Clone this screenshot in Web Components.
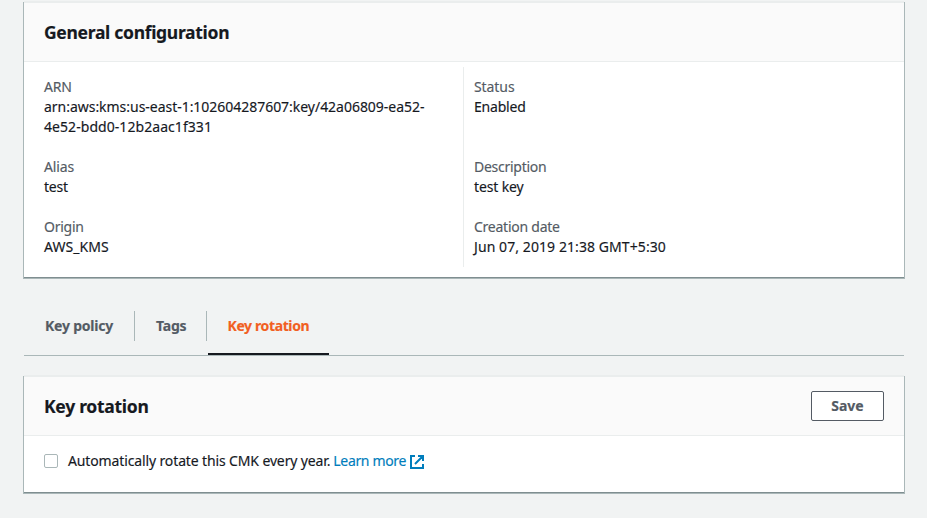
<!DOCTYPE html>
<html lang="en">
<head>
<meta charset="utf-8">
<title>Customer managed key</title>
<style>
body { margin: 0; height: 518px; overflow: hidden; background: #f1f3f3; color: #16191f; font: 14px/20px "Noto Sans", "Open Sans", sans-serif; -webkit-text-stroke: .15px currentColor; }
</style>
</head>
<body>
<kms-page></kms-page>

<template id="t-page">
<style>
:host { display: block; padding: 1px 23px 0 24px; }
.fields { display: grid; grid-template-columns: 439px 1fr; padding: 5px 0 10px; }
.col { display: grid; grid-template-rows: 80px 60px 60px; padding: 0 20px 0 20px; }
.col > * { padding-top: 10px; }
.col + .col { border-left: 1px solid #eaeded; padding-left: 10px; }
kms-tabs { margin: 33px 0 19px; }
.rotate { display: flex; align-items: center; padding: 15px 20px 21px; }
.rotate .text { margin-left: 10px; letter-spacing: -.13px; white-space: nowrap; }
kms-link { margin-left: 3px; }
</style>
<kms-panel>
  <span slot="title" style="letter-spacing:-.3px">General configuration</span>
  <div class="fields">
    <div class="col">
      <kms-field label="ARN" style="--label-spacing:-.2px;--value-spacing:-.03px">arn:aws:kms:us-east-1:102604287607:key/42a06809-ea52-<br><span style="letter-spacing:.06px">4e52-bdd0-12b2aac1f331</span></kms-field>
      <kms-field label="Alias" style="--label-spacing:-.1px;--value-spacing:-.2px">test</kms-field>
      <kms-field label="Origin" style="--label-spacing:-.25px;--value-spacing:.05px">AWS_KMS</kms-field>
    </div>
    <div class="col">
      <kms-field label="Status" style="--label-spacing:-.08px;--value-spacing:-.2px">Enabled</kms-field>
      <kms-field label="Description" style="--label-spacing:-.27px;--value-spacing:-.12px">test key</kms-field>
      <kms-field label="Creation date" style="--label-spacing:-.25px;--value-spacing:.08px">Jun 07, 2019 21:38 GMT+5:30</kms-field>
    </div>
  </div>
</kms-panel>
<kms-tabs>
  <kms-tab style="width:111px;letter-spacing:-.22px">Key policy</kms-tab>
  <kms-tab style="width:72px;letter-spacing:-.2px">Tags</kms-tab>
  <kms-tab active style="width:121px;letter-spacing:-.38px">Key rotation</kms-tab>
</kms-tabs>
<kms-panel>
  <span slot="title" style="letter-spacing:-.28px">Key rotation</span>
  <kms-button slot="actions">Save</kms-button>
  <div class="rotate">
    <kms-checkbox></kms-checkbox>
    <span class="text">Automatically rotate this CMK every year.</span>
    <kms-link>Learn more</kms-link>
  </div>
</kms-panel>
</template>

<template id="t-panel">
<style>
:host { display: block; background: #fff; border-top: 2px solid #eaeded; box-shadow: -1px 1px 0 #aab7b8, 1px 1px 0 #aab7b8; }
header { display: flex; align-items: center; justify-content: space-between; box-sizing: border-box; height: 59px; padding: 0 20px; background: #fafafa; border-bottom: 1px solid #eaeded; }
h2 { margin: 0; font-size: 17.5px; line-height: 22px; font-weight: 700; }
.body { border-bottom: 1px solid #7f8e90; }
</style>
<header><h2><slot name="title"></slot></h2><slot name="actions"></slot></header>
<div class="body"><slot></slot></div>
</template>

<template id="t-field">
<style>
:host { display: block; white-space: nowrap; }
.label { color: #545b64; letter-spacing: var(--label-spacing, 0); }
.value { letter-spacing: var(--value-spacing, 0); }
</style>
<div class="label"></div>
<div class="value"><slot></slot></div>
</template>

<template id="t-tabs">
<style>
:host { display: flex; height: 44px; border-bottom: 1px solid #aab7b8; }
</style>
<slot></slot>
</template>

<template id="t-tab">
<style>
:host { display: flex; box-sizing: border-box; flex: none; white-space: nowrap; color: #545b64; font-weight: 700; }
.text { flex: 1; height: 30px; line-height: 30px; padding-left: 21px; border-right: 1px solid #aab7b8; }
:host([active]) { color: #f15f22; margin-left: 1px; border-bottom: 2px solid #16191f; }
:host([active]) .text { border: 0; padding-left: 19.5px; }
</style>
<div class="text"><slot></slot></div>
</template>

<template id="t-button">
<style>
:host { display: block; }
button { display: block; width: 73px; height: 30px; padding: 0; border: 1px solid #545b64; border-radius: 2px; background: #fff; color: #545b64; font: inherit; font-weight: 700; letter-spacing: -.05px; }
</style>
<button type="button"><slot></slot></button>
</template>

<template id="t-checkbox">
<style>
:host { display: block; box-sizing: border-box; width: 14px; height: 14px; border: 1px solid #aab7b8; border-radius: 2px; background: #fff; }
</style>
</template>

<template id="t-link">
<style>
:host { display: flex; align-items: center; gap: 4px; color: #007dbc; letter-spacing: -.35px; white-space: nowrap; }
svg { display: block; position: relative; top: 1px; }
</style>
<span><slot></slot></span>
<svg width="14" height="14" viewBox="0 0 14 14" fill="none" stroke="currentColor" stroke-width="2"><path d="M5 1H1v12h12V9M8 1h5v5M12.7 1.3 5 9"/></svg>
</template>

<script>
const define = (name, setup) => customElements.define('kms-' + name, class extends HTMLElement {
  constructor() {
    super();
    const root = this.attachShadow({ mode: 'open' });
    root.append(document.getElementById('t-' + name).content.cloneNode(true));
  }
  connectedCallback() { if (setup) setup(this, this.shadowRoot); }
});
define('panel');
define('field', (el, root) => { root.querySelector('.label').textContent = el.getAttribute('label'); });
define('tabs');
define('tab');
define('button');
define('checkbox', el => { el.setAttribute('role', 'checkbox'); el.setAttribute('aria-checked', 'false'); });
define('link');
define('page');
</script>
</body>
</html>
